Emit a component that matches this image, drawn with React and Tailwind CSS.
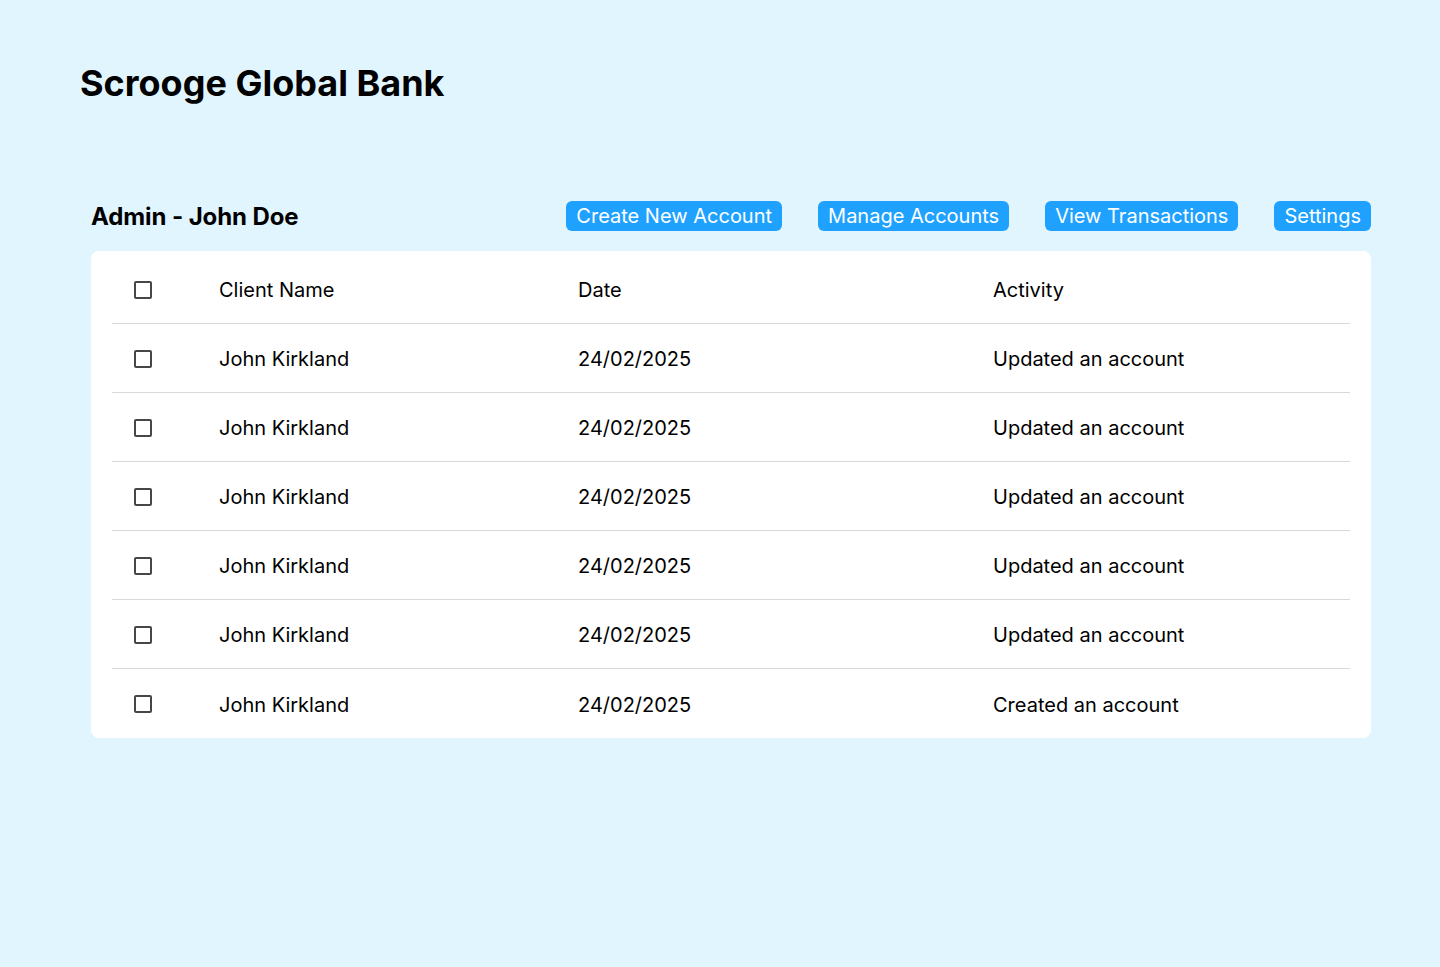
import React from "react";

const rows = [
  "Updated an account",
  "Updated an account",
  "Updated an account",
  "Updated an account",
  "Updated an account",
  "Created an account",
];

function Box() {
  return <div className="w-[18px] h-[18px] border-2 border-[#46464b] rounded-[2px]" />;
}

function Row({ a, b, c, last }) {
  return (
    <div className={`flex items-center h-[69px] ${last ? "h-[68px]" : "border-b border-[#d9d9d9]"}`}>
      <div className="w-[107px] pl-[22px] pt-[1px] flex items-center"><Box /></div>
      <div className="w-[359px] pt-[2px]">{a}</div>
      <div className="w-[415px] pt-[2px]">{b}</div>
      <div className="flex-1 pt-[2px]">{c}</div>
    </div>
  );
}

export default function App() {
  return (
    <div
      className="min-h-[967px] w-full bg-[#e1f5fe] text-black"
      style={{ fontFamily: "Inter, 'Noto Sans', sans-serif" }}
    >
      <div className="pl-[80px] pt-[60px]">
        <h1 className="text-[36px] font-bold leading-[46px]">Scrooge Global Bank</h1>
      </div>
      <div className="ml-[91px] w-[1280px] mt-[95px]">
        <div className="flex items-center justify-between h-[30px] mb-[20px]">
          <div className="text-[24px] font-bold tracking-[-0.1px] pt-[1px]">Admin - John Doe</div>
          <div className="flex items-center gap-[36px]">
            {["Create New Account", "Manage Accounts", "View Transactions", "Settings"].map((t) => (
              <button
                key={t}
                className="h-[30px] px-[10px] rounded-[6px] bg-[#1ea1ff] text-white text-[20px] leading-[30px]"
              >
                {t}
              </button>
            ))}
          </div>
        </div>
        <div className="bg-white rounded-[8px] px-[21px] pt-[4px] text-[20px]">
          <Row a="Client Name" b="Date" c="Activity" />
          {rows.map((r, i) => (
            <Row key={i} a="John Kirkland" b="24/02/2025" c={r} last={i === rows.length - 1} />
          ))}
        </div>
      </div>
    </div>
  );
}
